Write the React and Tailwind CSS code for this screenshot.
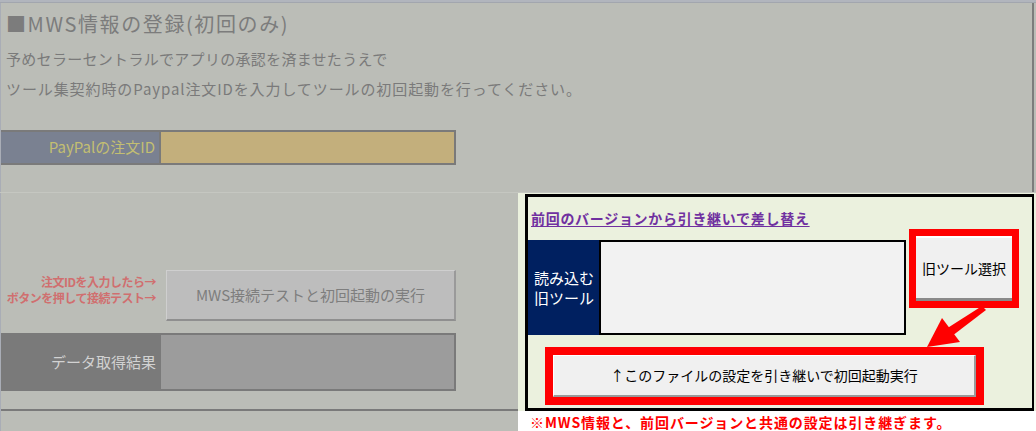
import React from 'react'

const jp = "font-['Noto_Sans_CJK_JP',sans-serif]"

function Arrow() {
  return (
    <svg className="absolute left-0 top-0 pointer-events-none" width="1036" height="431" viewBox="0 0 1036 431">
      <polygon points="982,306 986,310 952,336 946,329" fill="#ff0000" />
      <polygon points="942,318 927,347 960,342" fill="#ff0000" />
    </svg>
  )
}

export default function App() {
  return (
    <div className={`relative w-[1036px] h-[431px] overflow-hidden bg-[#bbbdb7] ${jp}`}>
      {/* column header strip */}
      <div className="h-[3px] bg-[#b1b5bd] border-b border-[#a2a6ae]" />

      {/* top area */}
      <div className="relative h-[189px] border-l border-[#a9adb6]">
        <div className="absolute right-[2px] top-0 h-full w-[2px] bg-[#7c7c7c]" />
        <h1 className="pl-[5px] pt-[9px] text-[20px] leading-[24px] text-[#7c7c7c] tracking-[1.6px]">■MWS情報の登録(初回のみ)</h1>
        <p className="pl-[5px] pt-[12px] text-[15px] leading-[22px] text-[#7a7a7a] tracking-[0.3px]">予めセラーセントラルでアプリの承認を済ませたうえで</p>
        <p className="pl-[5px] pt-[8px] text-[15px] leading-[22px] text-[#7a7a7a] tracking-[0.9px]">ツール集契約時のPaypal注文IDを入力してツールの初回起動を行ってください。</p>

        <div className="mt-[30px] flex h-[35px] w-[455px]">
          <div className="flex w-[158px] items-center justify-end pr-[4px] bg-[#7a8191] border-y-2 border-[#7a7a7a] text-[15px] text-[#c3be72]">
            PayPalの注文ID
          </div>
          <div className="flex-1 bg-[#c3af7c] border-2 border-[#7a7a7a]" />
        </div>
      </div>

      {/* lower area */}
      <div className="flex h-[239px] border-t border-[#c5c7c1]">
        {/* left sheet area */}
        <div className="flex w-[518px] flex-col border-l border-[#a9adb6]">
          <div className="flex-1">
            <div className="mt-[77px] flex items-center">
              <div className="mb-[12px] flex w-[155px] flex-col items-end whitespace-nowrap text-[12px] leading-[16px] font-bold text-[#d06f6f] tracking-[-0.5px]">
                <div>注文IDを入力したら→</div>
                <div>ボタンを押して接続テスト→</div>
              </div>
              <div className="ml-[10px] flex h-[51px] w-[290px] items-center justify-center bg-[#bdbdbd] border-t border-l border-[#cfcfcf] border-b-2 border-r-2 border-b-[#8f8f8f] border-r-[#9a9a9a] text-[15px] text-[#7e7e7e]">
                MWS接続テストと初回起動の実行
              </div>
            </div>
            <div className="mt-[12px] flex h-[58px] w-[455px]">
              <div className="flex w-[158px] items-center justify-end pr-[3px] bg-[#7a7a7a] text-[15px] text-[#d2d2d2]">
                データ取得結果
              </div>
              <div className="flex-1 bg-[#9c9c9c] border-2 border-[#7a7a7a]" />
            </div>
          </div>
          <div className="h-[2px] bg-[#7a7a7a] mb-[20px]" />
        </div>

        {/* right overlay panel */}
        <div className="flex w-[518px] flex-col bg-white">
          <div className="h-[218px] bg-[#ebf1de] pl-[7px] pt-[1px]">
            <div className="h-[217px] w-[509px] border-[3px] border-black border-r-[2px] border-b-[3px]">
              <div className="pl-[3px] pt-[11px] text-[14px] leading-[20px] font-bold text-[#7030a0] underline underline-offset-2 tracking-[0.7px]">
                前回のバージョンから引き継いで差し替え
              </div>
              <div className="mt-[1px] flex items-start">
                <div className="mt-[11px] flex h-[95px] items-stretch">
                  <div className="flex w-[71px] flex-col items-end justify-center pr-[5px] bg-[#002060] text-[15px] leading-[20px] text-white">
                    <div>読み込む</div>
                    <div>旧ツール</div>
                  </div>
                  <div className="w-[307px] bg-[#f2f2f2] border-2 border-black" />
                </div>
                <div className="ml-[3px] h-[79px] w-[110px] border-[7px] border-[#ff0000] bg-[#ff0000]">
                  <div className="flex h-full w-full items-center justify-center bg-[#f0f0f0] border-t-2 border-white border-b-[3px] border-b-[#8a8a8a] text-[14px] text-black">
                    旧ツール選択
                  </div>
                </div>
              </div>
              <div className="ml-[17px] mt-[12px] h-[58px] w-[439px] border-[8px] border-[#ff0000]">
                <div className="flex h-full w-full items-center justify-center bg-[#f0f0f0] border-t border-l border-white border-b-2 border-r-2 border-b-[#9a9a9a] border-r-[#9a9a9a] text-[14px] text-black">
                  ↑このファイルの設定を引き継いで初回起動実行
                </div>
              </div>
            </div>
          </div>
          <div className="pl-[12px] pt-[2px] text-[14px] leading-[18px] font-bold text-[#ff0000] tracking-[0.9px]">
            ※MWS情報と、前回バージョンと共通の設定は引き継ぎます。
          </div>
        </div>
      </div>

      <Arrow />
    </div>
  )
}
